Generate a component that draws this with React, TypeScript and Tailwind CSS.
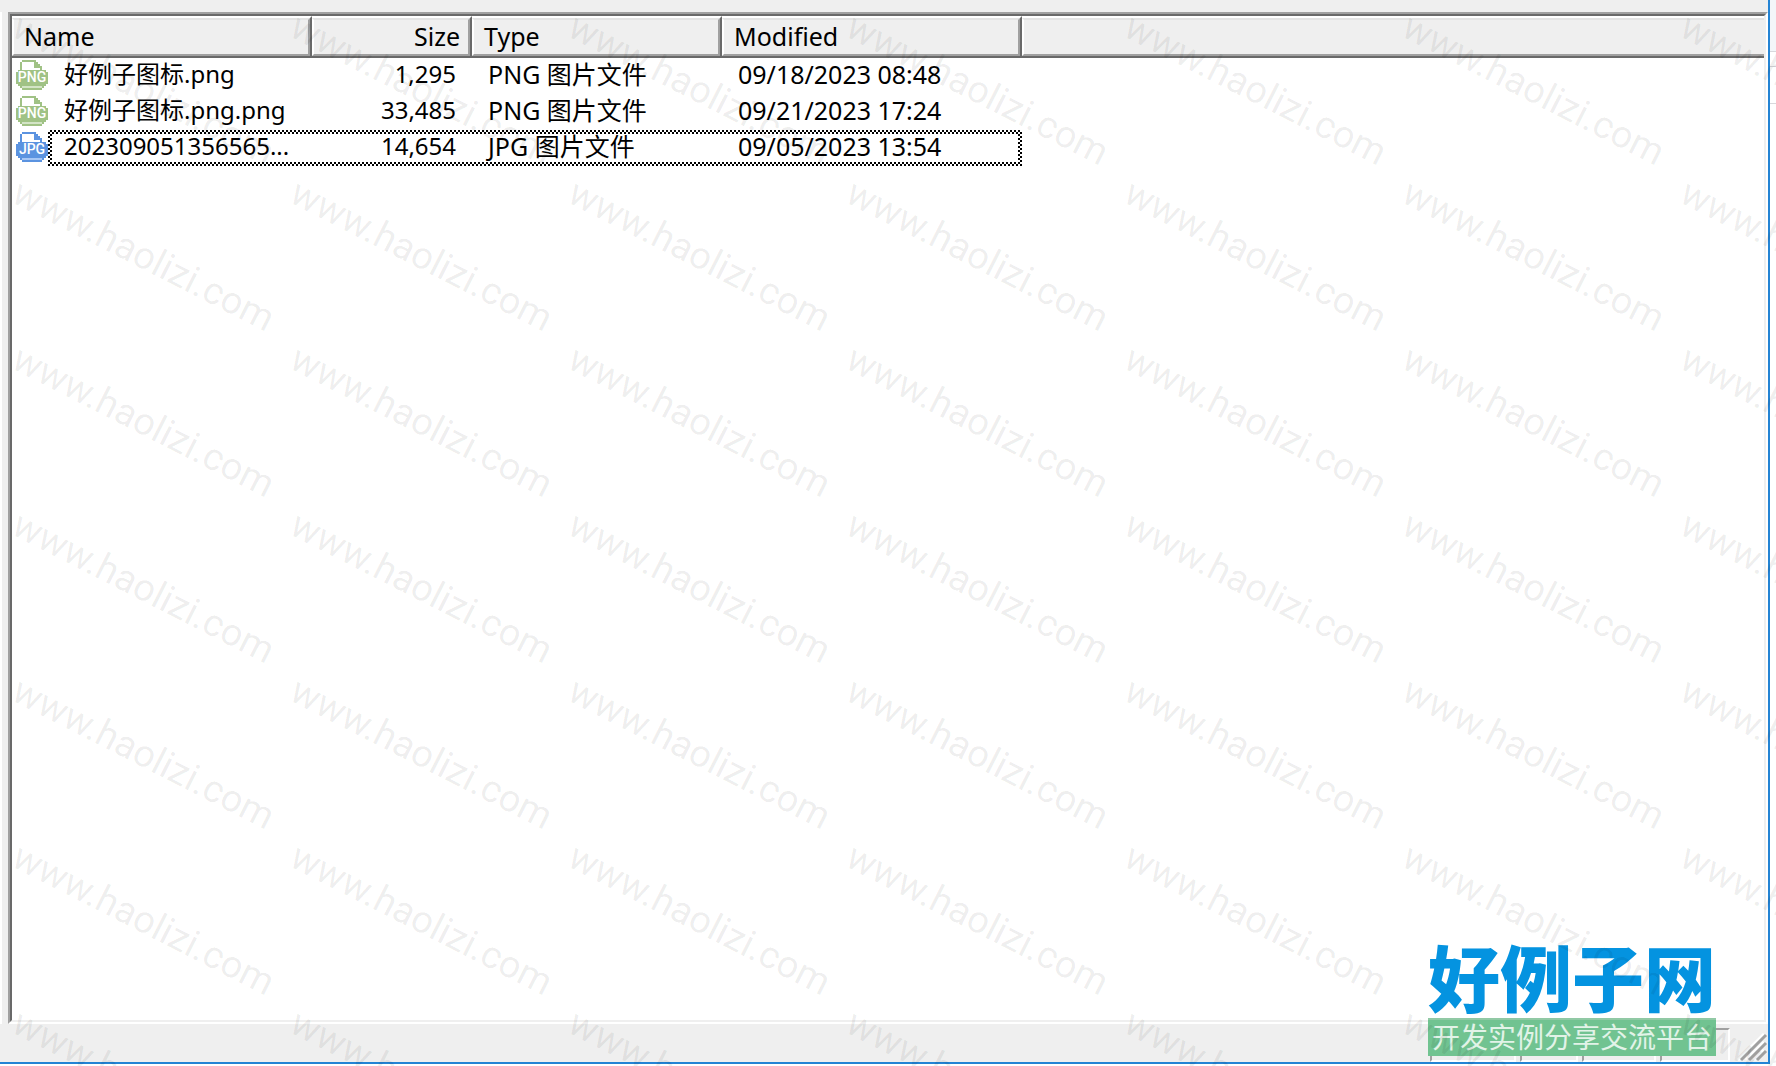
type FileRow = {
  name: string;
  size: string;
  type: string;
  modified: string;
  ext: string;
};

const files: FileRow[] = [
  { name: "好例子图标.png", size: "1,295", type: "PNG 图片文件", modified: "09/18/2023 08:48", ext: "PNG" },
  { name: "好例子图标.png.png", size: "33,485", type: "PNG 图片文件", modified: "09/21/2023 17:24", ext: "PNG" },
  { name: "202309051356565...", size: "14,654", type: "JPG 图片文件", modified: "09/05/2023 13:54", ext: "JPG" },
];

const FileIcon = ({ ext }: { ext: string }) => {
  const isJpg = ext === "JPG";
  return (
    <svg
      viewBox="0 0 16 15"
      className={isJpg ? "w-8 h-[30px] shrink-0 text-[#5b93e0]" : "w-8 h-[30px] shrink-0 text-[#a0c285]"}
      fill="currentColor"
      shapeRendering="crispEdges"
    >
      <path d="M3 0h7v1H3zM2 1h1v4H2zM9 1h2v1h1v1h1v1h-4zM12 4h1v1h-1z" />
      <path d="M1 5h14v1h1v6h-1v1H1v-1H0V6h1z" />
      <path d="M2 13h12v1h-1v1H3v-1H2z" />
      <path d="M3 13h10v1H3z" fill={isJpg ? "#a6c6f5" : "#d3e4c6"} />
      <text
        x="8"
        y="11"
        textAnchor="middle"
        fontSize="7"
        className="font-['Roboto',sans-serif] font-medium"
        fill="#fff"
      >
        {ext}
      </text>
    </svg>
  );
};

const HeaderCell = ({ label, right }: { label?: string; right?: boolean }) => (
  <th className="h-[42px] p-0 font-normal bg-[#efefef] border-t-2 border-t-white border-b-2 border-b-[#696969]">
    <div
      className={
        right
          ? "h-[38px] pr-2 text-right leading-8 border-2 border-t-[#e3e3e3] border-l-white border-r-[#a0a0a0] border-b-[#a0a0a0]"
          : "h-[38px] pl-[10px] text-left leading-8 border-2 border-t-[#e3e3e3] border-l-white border-r-[#a0a0a0] border-b-[#a0a0a0]"
      }
    >
      {label}
    </div>
  </th>
);

const StatusPane = ({ width }: { width: string }) => (
  <div className={`${width} h-[34px] border-2 border-t-[#a0a0a0] border-l-[#a0a0a0] border-r-white border-b-white`} />
);

const Watermark = () => (
  <div className="absolute inset-0 overflow-hidden pointer-events-none select-none" aria-hidden="true">
    <div className="grid grid-cols-[repeat(7,278px)] auto-rows-[166px] pl-3 pt-1">
      {Array.from({ length: 49 }, (_, i) => (
        <div key={i}>
          <span className="block w-max origin-top-left rotate-[27deg] pl-3 font-['Roboto',sans-serif] text-[38px] leading-8 text-black/7">
            www.haolizi.com
          </span>
        </div>
      ))}
    </div>
  </div>
);

const SiteLogo = () => (
  <div className="absolute right-[60px] bottom-[10px] font-['Noto_Sans_CJK_SC',sans-serif]">
    <div className="text-[72px] leading-[86px] font-black text-[#0493e0]">好例子网</div>
    <div className="h-[38px] border-t-2 border-t-[#91c9a5] bg-[#71c391] text-center text-[28px] leading-8 text-[#e2f3e8]">
      开发实例分享交流平台
    </div>
  </div>
);

const App = () => {
  return (
    <div className="relative flex h-screen bg-white text-black font-['Noto_Sans','Noto_Sans_CJK_SC',sans-serif]">
      <main className="flex flex-1 flex-col mb-0.5 bg-[#efefef] border-r-2 border-b-2 border-[#2484d4]">
        <div className="flex flex-1 mt-3 border-l-2 border-white">
          <div className="flex flex-1 ml-[6px] border-2 border-t-[#a0a0a0] border-l-[#a0a0a0] border-r-white border-b-white">
            <div className="flex-1 bg-white border-2 border-t-[#696969] border-l-[#696969] border-r-[#efefef] border-b-[#efefef]">
              <table className="w-full table-fixed border-separate border-spacing-0">
                <colgroup>
                  <col className="w-[300px]" />
                  <col className="w-[160px]" />
                  <col className="w-[250px]" />
                  <col className="w-[300px]" />
                  <col />
                </colgroup>
                <thead className="text-[25px]">
                  <tr className="[&>th:not(:last-child)]:border-r-2 [&>th]:border-r-[#696969] [&>th:last-child>div]:border-r-0">
                    <HeaderCell label="Name" />
                    <HeaderCell label="Size" right />
                    <HeaderCell label="Type" />
                    <HeaderCell label="Modified" />
                    <HeaderCell />
                  </tr>
                </thead>
                <tbody className="text-2xl leading-8 whitespace-nowrap">
                  {files.map((file, index) => (
                    <tr key={file.name} className="h-9 align-top">
                      <td className="p-0">
                        <div className="flex h-9 items-start gap-4 pl-1">
                          <div className="pt-0.5">
                            <FileIcon ext={file.ext} />
                          </div>
                          <span>{file.name}</span>
                        </div>
                      </td>
                      <td className="p-0 pr-4 text-right">{file.size}</td>
                      <td className="p-0 pl-4 text-[25px]">{file.type}</td>
                      <td className="relative p-0 pl-4 text-[25px]">
                        {file.modified}
                        {index === 2 ? (
                          // dithered focus rectangle around the current row
                          <div className="absolute top-0 right-0 -left-[674px] h-9 p-1 bg-[conic-gradient(#000_25%,#fff_0_50%,#000_0_75%,#fff_0)] bg-size-[4px_4px] [mask:linear-gradient(#000_0_0)_content-box_exclude,linear-gradient(#000_0_0)]" />
                        ) : null}
                      </td>
                      <td className="p-0"></td>
                    </tr>
                  ))}
                </tbody>
              </table>
            </div>
          </div>
        </div>

        <footer className="flex h-[38px] items-end justify-end gap-1">
          <StatusPane width="w-[86px]" />
          <StatusPane width="w-[58px]" />
          <StatusPane width="w-[74px]" />
          <StatusPane width="w-[70px]" />
          <svg viewBox="0 0 34 34" className="w-[34px] h-[34px]" fill="none">
            <path d="M4 32L30 6M12 32L30 14M20 32L30 22" stroke="#fff" strokeWidth="3" />
            <path d="M7 32L32 7M15 32L32 15M23 32L32 23" stroke="#a0a0a0" strokeWidth="3" />
          </svg>
        </footer>
      </main>

      {/* edge of the window behind */}
      <aside className="w-[6px] bg-white">
        <div className="h-[52px] bg-[#f3f6f9] border-b border-[#d8d8dc]" />
        <div className="h-[15px] border-b border-[#d8d8dc]" />
        <div className="h-[37px] border-b border-[#d8d8dc]" />
      </aside>

      <SiteLogo />
      <Watermark />
    </div>
  );
};

export default App;
